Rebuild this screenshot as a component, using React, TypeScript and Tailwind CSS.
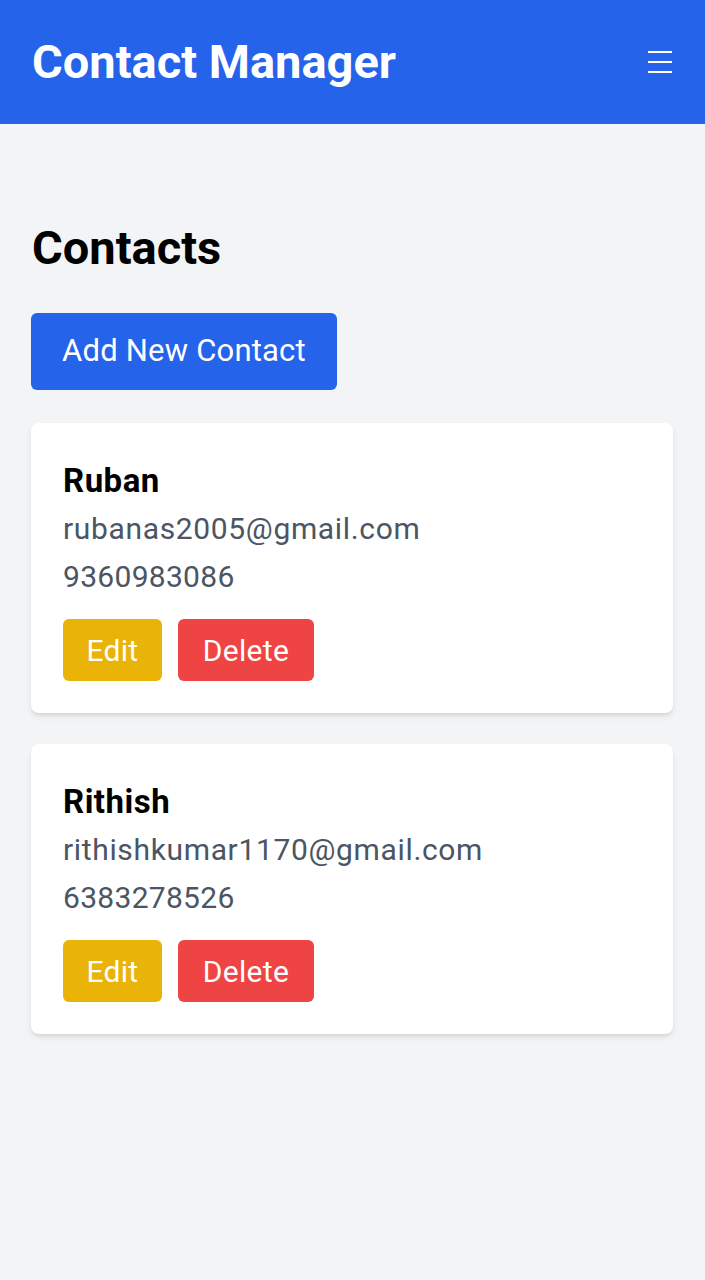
import React from 'react';

type Contact = { id: number; name: string; email: string; phone: string };

const contacts: Contact[] = [
  { id: 1, name: 'Ruban', email: 'rubanas2005@gmail.com', phone: '9360983086' },
  { id: 2, name: 'Rithish', email: 'rithishkumar1170@gmail.com', phone: '6383278526' },
];

const App: React.FC = () => {
  return (
    <div className="min-h-[1280px] bg-[#f3f4f6] font-['Roboto',sans-serif]">
      {/* Header */}
      <header className="h-[124px] bg-[#2563eb] px-8 flex items-center justify-between">
        <h1 className="text-[47px] leading-[56px] font-bold text-white">Contact Manager</h1>
        <button className="mr-[1px]" aria-label="Menu">
          <svg width="24" height="24" viewBox="0 0 24 24" className="text-white">
            <rect x="0" y="1" width="24" height="2" fill="currentColor" />
            <rect x="0" y="11" width="24" height="2" fill="currentColor" />
            <rect x="0" y="21" width="24" height="2" fill="currentColor" />
          </svg>
        </button>
      </header>

      <main className="pl-[31px] pr-8 pt-[96px]">
        <h2 className="pl-[1px] text-[47px] leading-[56px] font-bold text-black">Contacts</h2>
        <button className="mt-[37px] h-[77px] w-[306px] bg-[#2563eb] text-white text-[31px] tracking-[0.2px] rounded-md">
          Add New Contact
        </button>

        <div className="mt-[33px] flex flex-col gap-[31px]">
          {contacts.map((c) => (
            <div key={c.id} className="bg-white rounded-lg shadow-md px-8 pt-[34px] pb-8">
              <h3 className="text-[33px] leading-[48px] tracking-[0.5px] font-bold text-black">{c.name}</h3>
              <p className="text-[30px] leading-[48px] tracking-[0.65px] text-[#4b5563]">{c.email}</p>
              <p className="text-[30px] leading-[48px] tracking-[0.3px] text-[#4b5563]">{c.phone}</p>
              <div className="mt-[18px] flex gap-4">
                <button className="h-[62px] w-[99px] bg-[#eab308] text-white text-[30px] tracking-[0.3px] rounded-md">Edit</button>
                <button className="h-[62px] w-[136px] bg-[#ef4444] text-white text-[30px] tracking-[0.3px] rounded-md">Delete</button>
              </div>
            </div>
          ))}
        </div>
      </main>
    </div>
  );
};

export default App;
